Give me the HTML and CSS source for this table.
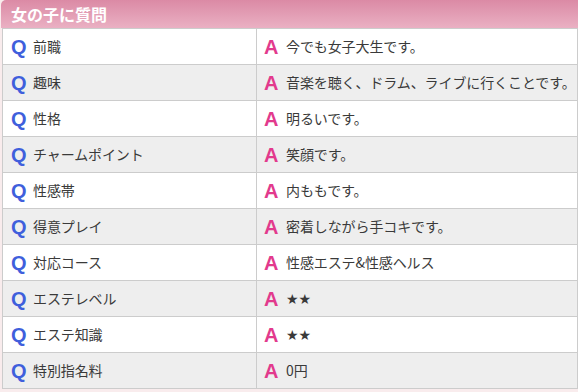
FILE: index.html
```html
<!DOCTYPE html>
<html lang="ja">
<head>
<meta charset="utf-8">
<link rel="stylesheet" href="styles.css">
</head>
<body>
<div class="box">
  <div class="head">女の子に質問</div>
  <table class="qa">
    <tr><td class="q"><span class="mq">Q</span>前職</td><td class="a"><span class="ma">A</span>今でも女子大生です。</td></tr>
    <tr><td class="q"><span class="mq">Q</span>趣味</td><td class="a"><span class="ma">A</span>音楽を聴く、ドラム、ライブに行くことです。</td></tr>
    <tr><td class="q"><span class="mq">Q</span>性格</td><td class="a"><span class="ma">A</span>明るいです。</td></tr>
    <tr><td class="q"><span class="mq">Q</span>チャームポイント</td><td class="a"><span class="ma">A</span>笑顔です。</td></tr>
    <tr><td class="q"><span class="mq">Q</span>性感帯</td><td class="a"><span class="ma">A</span>内ももです。</td></tr>
    <tr><td class="q"><span class="mq">Q</span>得意プレイ</td><td class="a"><span class="ma">A</span>密着しながら手コキです。</td></tr>
    <tr><td class="q"><span class="mq">Q</span>対応コース</td><td class="a"><span class="ma">A</span>性感エステ&amp;性感ヘルス</td></tr>
    <tr><td class="q"><span class="mq">Q</span>エステレベル</td><td class="a"><span class="ma">A</span><span class="stars">★★</span></td></tr>
    <tr><td class="q"><span class="mq">Q</span>エステ知識</td><td class="a"><span class="ma">A</span><span class="stars">★★</span></td></tr>
    <tr><td class="q"><span class="mq">Q</span>特別指名料</td><td class="a"><span class="ma">A</span>0円</td></tr>
  </table>
</div>
</body>
</html>
```

FILE: styles.css
```css
html, body {
  margin: 0;
  padding: 0;
  background: #f9eced;
  overflow: hidden;
}
body {
  font-family: "Noto Sans CJK JP", "Noto Sans", sans-serif;
  color: #3a3a3a;
}
.box {
  margin-left: 2px;
  width: 576px;
}
.head {
  height: 28px;
  box-sizing: border-box;
  padding-left: 10px;
  margin-left: -1px;
  border-top-left-radius: 5px;
  background: linear-gradient(#db8aa5, #eab0c3);
  color: #fff;
  font-weight: bold;
  font-size: 16px;
  line-height: 28px;
}
.qa {
  width: 576px;
  border-collapse: collapse;
  table-layout: fixed;
}
.qa td {
  height: 35px;
  padding: 0;
  border: 1px solid #cccccc;
  font-size: 14px;
  line-height: 20px;
  vertical-align: middle;
  white-space: nowrap;
  letter-spacing: -0.1px;
}
.qa td.q {
  width: 254px;
  padding-left: 8px;
  box-sizing: border-box;
}
.qa td.a {
  padding-left: 7px;
}
.qa tr:nth-child(odd) td { background: #ffffff; }
.qa tr:nth-child(even) td { background: #eeeeee; }
.mq, .ma {
  font-family: "Liberation Sans", Arial, sans-serif;
  font-weight: bold;
  font-size: 20px;
  display: inline-block;
  vertical-align: -2px;
  letter-spacing: 0;
}
.mq {
  color: #3f5fdc;
  width: 22px;
}
.ma {
  color: #e23a8d;
  width: 22px;
}
.stars {
  font-family: "DejaVu Sans", sans-serif;
  font-size: 14px;
  letter-spacing: 0;
}
```
